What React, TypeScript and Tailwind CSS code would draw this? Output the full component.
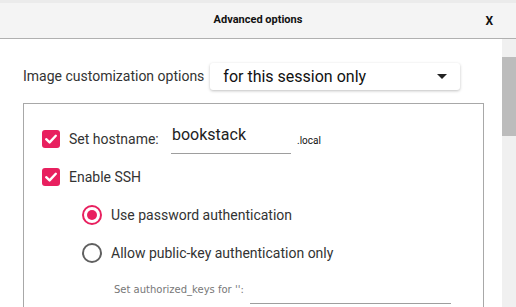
import React from "react";

function Checkbox() {
    return (
        <span className="flex h-[18px] w-[18px] shrink-0 items-center justify-center rounded-[3px] bg-[#e8205f]">
            <svg viewBox="0 0 18 18" className="h-[18px] w-[18px]">
                <path d="M4.2 9.2 L7.6 12.4 L13.8 5.8" fill="none" stroke="white" strokeWidth="2.4" strokeLinecap="round" strokeLinejoin="round"/>
            </svg>
        </span>
    );
}

function Radio({checked}: {checked: boolean}) {
    return (
        <span
            className={
                checked
                    ? "flex h-[20px] w-[20px] shrink-0 items-center justify-center rounded-full border-2 border-[#e8205f]"
                    : "flex h-[20px] w-[20px] shrink-0 items-center justify-center rounded-full border-2 border-[#606060]"
            }
        >
            {checked ? <span className="h-[10px] w-[10px] rounded-full bg-[#e8205f]"/> : null}
        </span>
    );
}

export default function App() {
    return (
        <div className="flex h-[307px] w-[516px] flex-col overflow-hidden bg-white font-['Roboto',sans-serif] text-[#222]">
            {/* title bar */}
            <div className="h-[3px] bg-[#ebebeb]"/>
            <div className="relative flex h-[36px] shrink-0 items-center justify-center border-b border-[#b0b0b0] bg-[#f4f4f4]">
                <span className="text-[11px] font-bold text-[#111]">Advanced options</span>
                <span className="absolute right-[23px] text-[12px] font-bold text-[#111]">X</span>
            </div>

            <div className="flex min-h-0 flex-1">
                <div className="flex-1 pl-[23px] pr-[18px] pt-[24px]">
                    <div className="flex h-[27px] items-center">
                        <span className="text-[14px] text-[#333]">Image customization options</span>
                        <div className="ml-[6px] flex h-[27px] w-[250px] items-center justify-between rounded-[3px] bg-white pl-[13px] pr-[13px] shadow-[0_1px_3px_rgba(0,0,0,0.25)]">
                            <span className="text-[16px] text-[#111]">for this session only</span>
                            <svg viewBox="0 0 10 5" className="h-[5px] w-[10px]">
                                <path d="M0 0 L10 0 L5 5 Z" fill="#222"/>
                            </svg>
                        </div>
                    </div>

                    <div className="mt-[13px] h-[230px] border border-[#a8a8a8] pl-[18px] pt-[20px]">
                        <div className="flex h-[30px] items-center">
                            <Checkbox/>
                            <span className="ml-[9px] w-[102px] text-[14px] text-[#333]">Set hostname:</span>
                            <div className="flex h-[30px] w-[120px] items-end border-b border-[#9e9e9e] pb-[8px] pl-[1px]">
                                <span className="text-[16px] leading-[20px] text-[#222]">bookstack</span>
                            </div>
                            <span className="ml-[6px] mt-[2px] text-[10px] text-[#111]">.local</span>
                        </div>
                        <div className="mt-[8px] flex h-[30px] items-center">
                            <Checkbox/>
                            <span className="ml-[9px] text-[14px] text-[#333]">Enable SSH</span>
                        </div>
                        <div className="mt-[8px] flex h-[30px] items-center pl-[40px]">
                            <Radio checked={true}/>
                            <span className="ml-[9px] text-[14px] text-[#333]">Use password authentication</span>
                        </div>
                        <div className="mt-[8px] flex h-[30px] items-center pl-[40px]">
                            <Radio checked={false}/>
                            <span className="ml-[9px] text-[14px] text-[#333]">Allow public-key authentication only</span>
                        </div>
                        <div className="mt-[6px] flex h-[32px] items-start pl-[72px]">
                            <span className="mt-[8px] font-['DejaVu_Sans',sans-serif] text-[10px] text-[#777]">Set authorized_keys for '':</span>
                            <div className="ml-[6px] h-[30px] w-[201px] border-b border-[#9e9e9e]"/>
                        </div>
                    </div>
                </div>

                {/* scrollbar */}
                <div className="w-[14px] shrink-0 bg-[#f0f0f0] pt-[18px]">
                    <div className="h-[79px] bg-[#bcbcbc]"/>
                </div>
            </div>
        </div>
    );
}
